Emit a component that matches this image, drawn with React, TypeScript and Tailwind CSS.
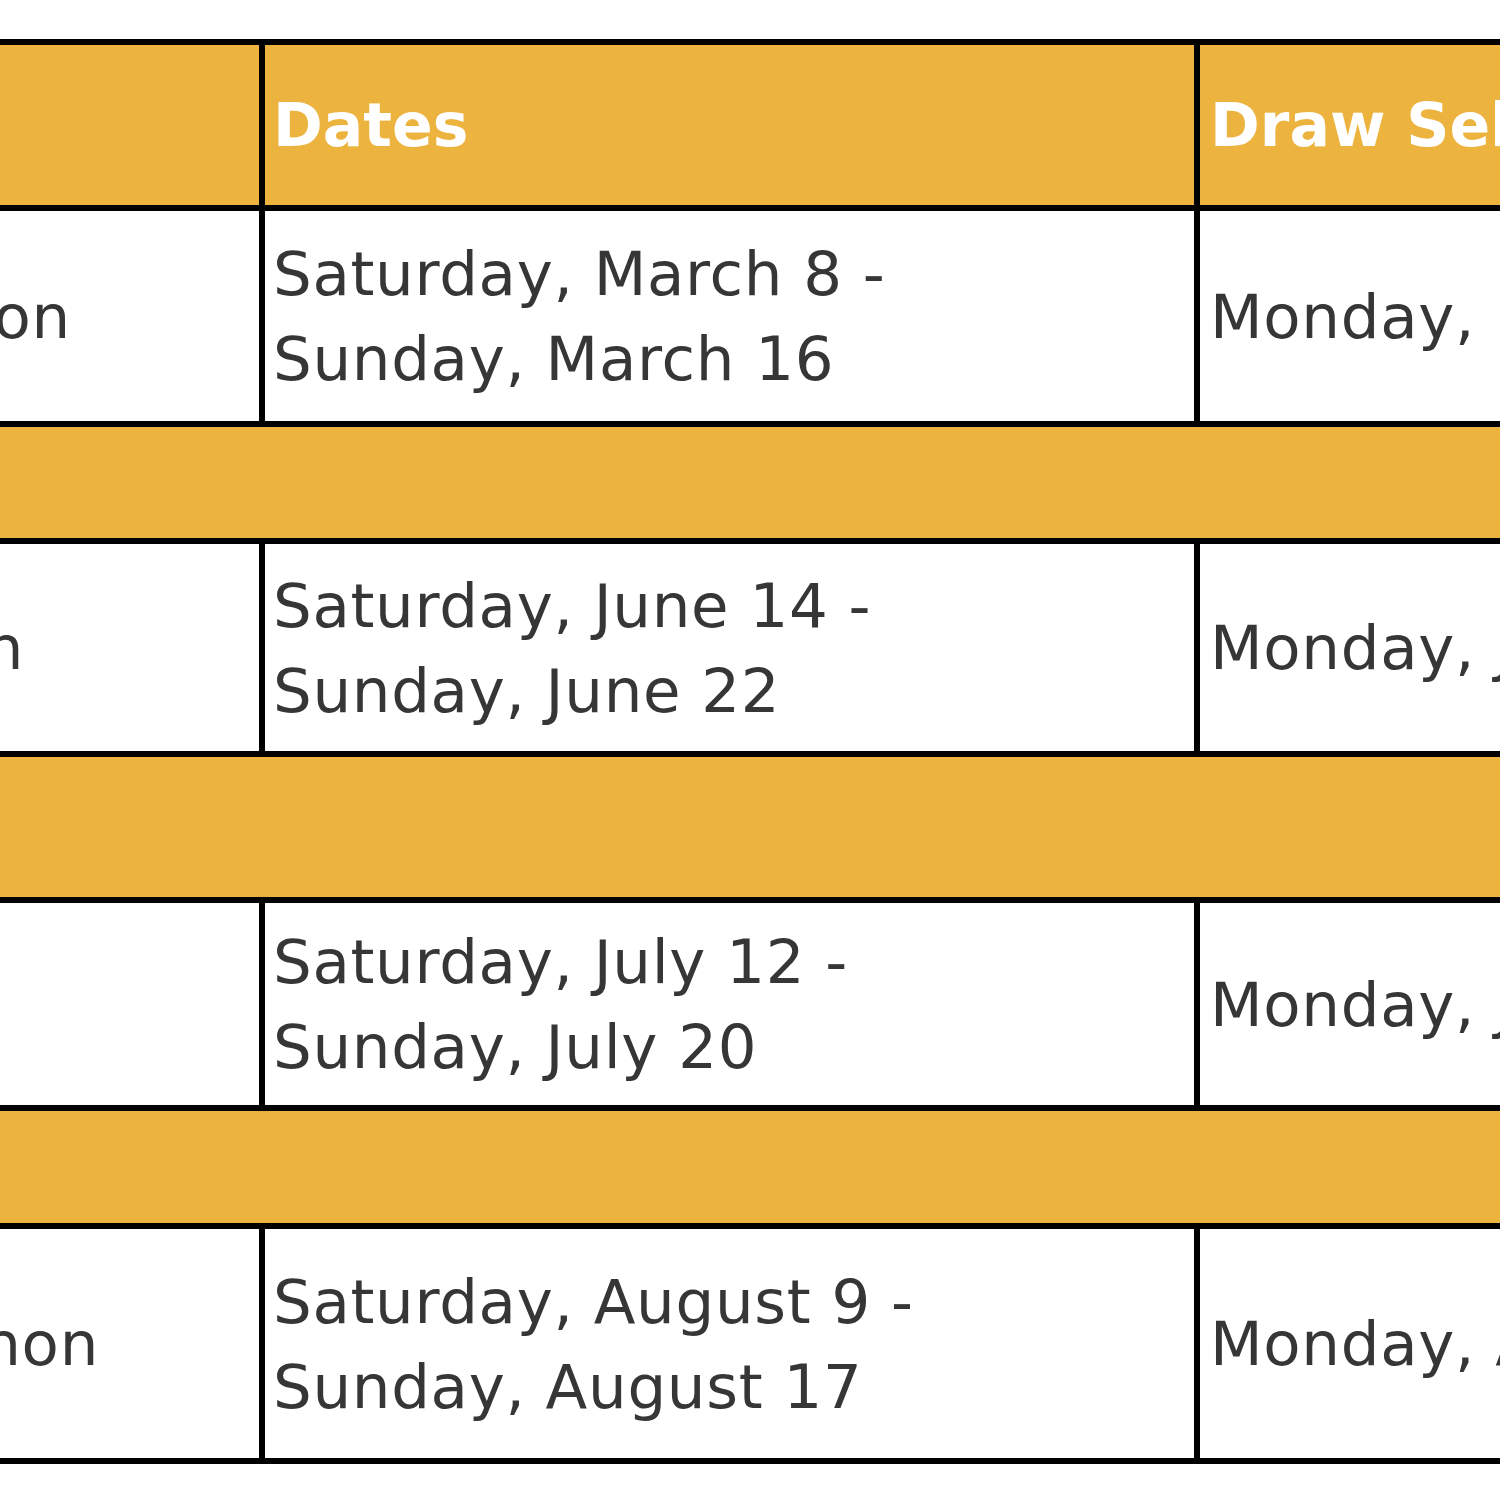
import React from "react";

const font = "font-['DejaVu_Sans',sans-serif]";

function DateCell({ a, b }: { a: string; b: string }) {
  return (
    <div className="flex flex-col justify-center pl-[8px] text-[61px] leading-[85px] tracking-[0.7px] text-[#363636]">
      <div className="whitespace-nowrap">{a}</div>
      <div className="whitespace-nowrap">{b}</div>
    </div>
  );
}

function Row({
  h,
  first,
  firstPad,
  a,
  b,
  draw,
  last,
}: {
  h: string;
  first: string;
  firstPad: string;
  a: string;
  b: string;
  draw: string;
  last?: boolean;
}) {
  return (
    <div className={`grid grid-cols-[559px_935px_1fr] ${h} ${last ? "" : "border-b-[6px] border-black"}`}>
      <div className={`flex items-center justify-end overflow-hidden border-r-[6px] border-black text-[61px] leading-[85px] tracking-[0.7px] text-[#363636] whitespace-nowrap ${firstPad}`}>
        {first}
      </div>
      <div className="border-r-[6px] border-black flex">
        <DateCell a={a} b={b} />
      </div>
      <div className="flex items-center pl-[10px] text-[61px] leading-[85px] tracking-[0.7px] text-[#363636] whitespace-nowrap overflow-hidden">
        {draw}
      </div>
    </div>
  );
}

function Band({ h }: { h: string }) {
  return <div className={`${h} bg-[#ECB33F] border-b-[6px] border-black`} />;
}

export default function App() {
  return (
    <div className={`w-[1500px] h-[1500px] overflow-hidden bg-white pt-[39px] ${font}`}>
      <div className="ml-[-300px] w-[2400px] border-[6px] border-black">
        <div className="grid grid-cols-[559px_935px_1fr] h-[166px] bg-[#ECB33F] border-b-[6px] border-black">
          <div className="border-r-[6px] border-black" />
          <div className="border-r-[6px] border-black flex items-center pl-[8px] text-[60px] leading-[85px] font-bold text-white">
            Dates
          </div>
          <div className="flex items-center pl-[10px] text-[60px] leading-[85px] font-bold text-white whitespace-nowrap">
            Draw Selection Date
          </div>
        </div>
        <Row
          h="h-[216px]"
          first="Spring Session"
          firstPad="pr-[188px]"
          a="Saturday, March 8 -"
          b="Sunday, March 16"
          draw="Monday, February 3"
        />
        <Band h="h-[117px]" />
        <Row
          h="h-[213px]"
          first="Summer Session"
          firstPad="pr-[235px]"
          a="Saturday, June 14 -"
          b="Sunday, June 22"
          draw="Monday, June 2"
        />
        <Band h="h-[146px]" />
        <Row
          h="h-[208px]"
          first="Youth"
          firstPad="pr-[320px]"
          a="Saturday, July 12 -"
          b="Sunday, July 20"
          draw="Monday, June 30"
        />
        <Band h="h-[118px]" />
        <Row
          h="h-[229px]"
          first="Shannon"
          firstPad="pr-[160px]"
          a="Saturday, August 9 -"
          b="Sunday, August 17"
          draw="Monday, April 28"
          last
        />
      </div>
    </div>
  );
}
